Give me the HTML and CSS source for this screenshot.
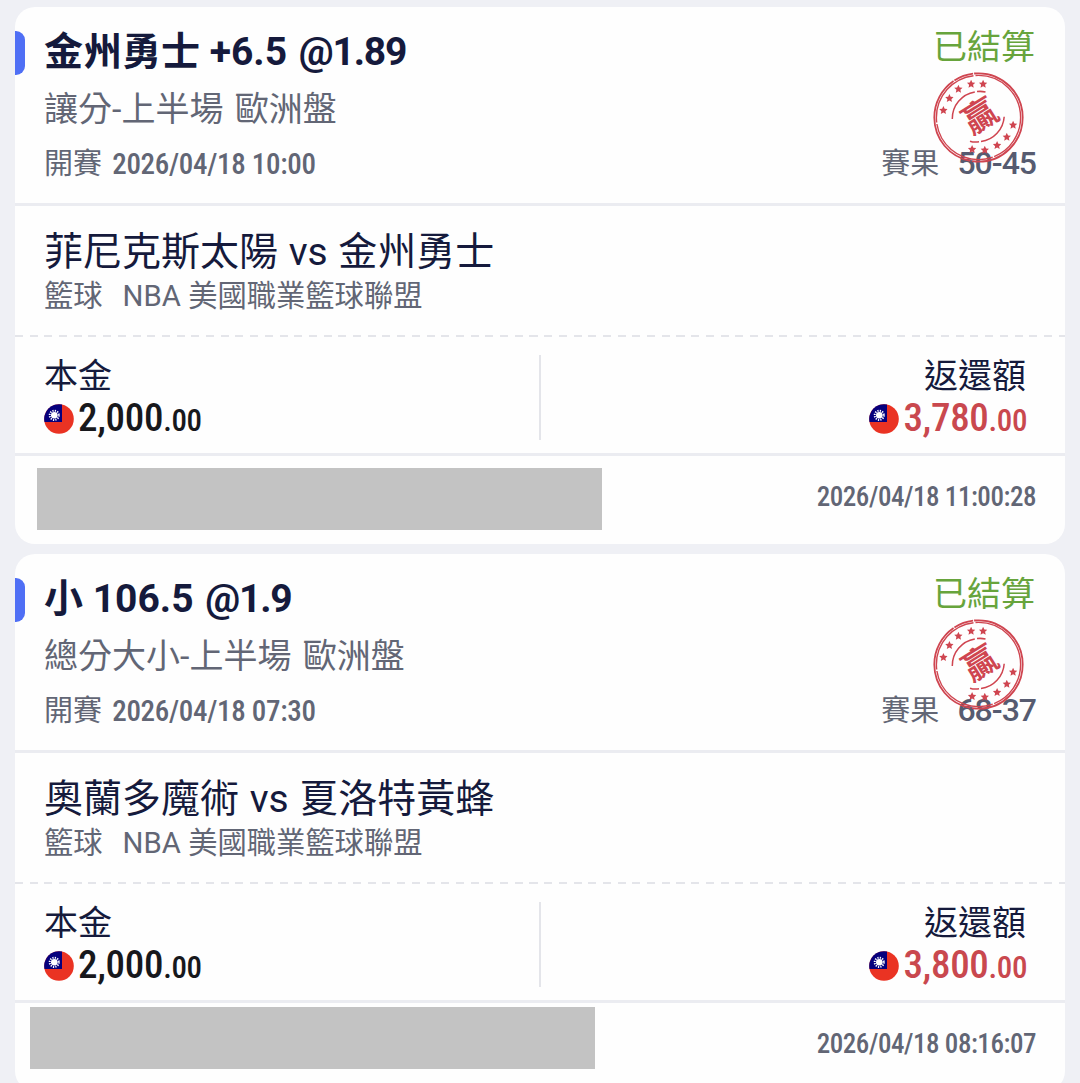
FILE: index.html
```html
<!DOCTYPE html>
<html lang="zh-Hant">
<head>
    <meta charset="UTF-8">
    <meta name="viewport" content="width=device-width, initial-scale=1.0">
    <title>投注紀錄</title>
    <link rel="stylesheet" href="styles.css">
</head>
<body>
    <!-- shared icons -->
    <svg class="defs" width="0" height="0">
        <symbol id="flag" viewBox="0 0 30 30">
            <circle cx="15" cy="15" r="14.8" fill="#ea3323"/>
            <path d="M18 .5V18H.5A14.8 14.8 0 0 1 18 .5z" fill="#06007d"/>
            <circle cx="10.3" cy="11.3" r="4.6" fill="none" stroke="#fff" stroke-width="2" stroke-dasharray="1.2 1.2"/>
            <circle cx="10.3" cy="11.3" r="3.3" fill="#fff"/>
        </symbol>
        <symbol id="star" viewBox="-10 -10 20 20">
            <path d="M0-10 2.9-3.6 9.5-3.1 4.5 1.7 5.9 8.1 0 4.8-5.9 8.1-4.5 1.7-9.5-3.1-2.9-3.6z"/>
        </symbol>
        <symbol id="stamp" viewBox="12 11 94 94">
            <g fill="none" stroke="#cf4550">
                <circle cx="58.5" cy="57.5" r="44.2" stroke-width="1.8" stroke-dasharray="76 1.5 104 1 20 1 74.2 0"/>
                <circle cx="58.5" cy="57.5" r="42.1" stroke-width="1.4" stroke-dasharray="50 1.5 74 1.5 66 2 69.5 0"/>
                <path d="M32.3 59A27 27 0 0 1 54.8 32M57 31.6Q61 31 65.5 32" stroke-width="1.5"/>
                <path d="M84.2 56.7A27 27 0 0 1 61 81.6M59 81.8Q54 82.6 50 81.2" stroke-width="1.5"/>
            </g>
            <g fill="#cf4550">
                <use href="#star" x="19" y="46" width="8.8" height="8.8"/>
                <use href="#star" x="25" y="34" width="8.8" height="8.8"/>
                <use href="#star" x="34" y="24.7" width="8.8" height="8.8"/>
                <use href="#star" x="46.7" y="19.7" width="8.8" height="8.8"/>
                <use href="#star" x="58.7" y="19.7" width="8.8" height="8.8"/>
                <use href="#star" x="88.7" y="60.7" width="8.8" height="8.8"/>
                <use href="#star" x="82.4" y="72.7" width="8.8" height="8.8"/>
                <use href="#star" x="72.7" y="81" width="8.8" height="8.8"/>
                <use href="#star" x="60.4" y="85.7" width="8.8" height="8.8"/>
                <use href="#star" x="47.7" y="85" width="8.8" height="8.8"/>
            </g>
        </symbol>
    </svg>

    <div class="card">
        <div class="bet">
            <div class="bet-info">
                <h2>金州勇士 <span class="handicap">+6.5</span> <span class="odds">@1.89</span></h2>
                <div class="market">讓分-上半場 歐洲盤</div>
                <div class="start">開賽 <span class="num">2026/04/18 10:00</span></div>
            </div>
            <div class="bet-status">
                <div class="status">已結算</div>
                <div class="score">賽果 <span class="num">50-45</span></div>
                <div class="stamp"><svg><use href="#stamp"/></svg><span>贏</span></div>
            </div>
        </div>
        <div class="match">
            <div class="teams">菲尼克斯太陽 vs 金州勇士</div>
            <div class="league"><span>籃球</span><span>NBA 美國職業籃球聯盟</span></div>
        </div>
        <div class="amounts">
            <div class="amount">
                <div class="label">本金</div>
                <div class="money"><svg class="flag"><use href="#flag"/></svg><span>2,000<small>.00</small></span></div>
            </div>
            <div class="amount payout">
                <div class="label">返還額</div>
                <div class="money"><svg class="flag"><use href="#flag"/></svg><span>3,780<small>.00</small></span></div>
            </div>
        </div>
        <div class="footer">
            <div class="mask"></div>
            <div class="time num">2026/04/18 11:00:28</div>
        </div>
    </div>

    <div class="card">
        <div class="bet">
            <div class="bet-info">
                <h2>小 <span class="total">106.5</span> <span class="odds">@1.9</span></h2>
                <div class="market">總分大小-上半場 歐洲盤</div>
                <div class="start">開賽 <span class="num">2026/04/18 07:30</span></div>
            </div>
            <div class="bet-status">
                <div class="status">已結算</div>
                <div class="score">賽果 <span class="num">68-37</span></div>
                <div class="stamp"><svg><use href="#stamp"/></svg><span>贏</span></div>
            </div>
        </div>
        <div class="match">
            <div class="teams">奧蘭多魔術 vs 夏洛特黃蜂</div>
            <div class="league"><span>籃球</span><span>NBA 美國職業籃球聯盟</span></div>
        </div>
        <div class="amounts">
            <div class="amount">
                <div class="label">本金</div>
                <div class="money"><svg class="flag"><use href="#flag"/></svg><span>2,000<small>.00</small></span></div>
            </div>
            <div class="amount payout">
                <div class="label">返還額</div>
                <div class="money"><svg class="flag"><use href="#flag"/></svg><span>3,800<small>.00</small></span></div>
            </div>
        </div>
        <div class="footer">
            <div class="mask mask-high"></div>
            <div class="time num">2026/04/18 08:16:07</div>
        </div>
    </div>
</body>
</html>
```

FILE: styles.css
```css
* {
    box-sizing: border-box;
}
body {
    margin: 0;
    padding: 7px 15px 0;
    height: 1083px;
    overflow: hidden;
    display: flex;
    flex-direction: column;
    gap: 10px;
    background-color: #eff0f5;
    color: #151a3c;
    font-family: Roboto, "Noto Sans CJK TC", sans-serif;
}
.defs {
    position: absolute;
}
.card {
    flex: none;
    height: 537px;
    background-color: #fefefe;
    border-radius: 20px;
    overflow: hidden;
}
.bet {
    display: flex;
    justify-content: space-between;
    height: 199px;
    padding: 17px 30px 0 0;
    border-bottom: 3px solid #ebecf1;
}
.bet-info {
    padding-left: 29px;
    position: relative;
}
.bet-info::before {
    content: "";
    position: absolute;
    left: 0;
    top: 7px;
    width: 10px;
    height: 44px;
    background-color: #4f6ff5;
    border-radius: 0 9px 9px 0;
}
h2 {
    margin: 0;
    font-size: 39px;
    line-height: 57px;
    font-weight: 700;
    white-space: nowrap;
}
.odds {
    margin-left: 2px;
    letter-spacing: -1.2px;
}
.market {
    font-size: 34px;
    line-height: 56px;
    word-spacing: 3px;
    color: #626675;
}
.start,
.score {
    font-size: 29px;
    line-height: 54px;
    white-space: nowrap;
    color: #626675;
}
.num {
    font-size: 29px;
    font-weight: 500;
    font-stretch: 75%;
}
.start .num {
    margin-left: 3px;
    letter-spacing: -0.3px;
}
.bet-status {
    position: relative;
    text-align: right;
}
.status {
    font-size: 34px;
    line-height: 46px;
    color: #67a43c;
}
.score {
    padding-top: 66px;
}
.score .num {
    margin-left: 11px;
    margin-right: -1px;
    font-size: 32px;
    font-stretch: 100%;
    letter-spacing: -1px;
    color: #565b70;
}
.stamp {
    position: absolute;
    right: 9px;
    top: 47px;
    width: 94px;
    height: 94px;
}
.stamp svg {
    display: block;
    width: 94px;
    height: 94px;
}
.stamp span {
    position: absolute;
    left: 28px;
    top: 27px;
    width: 40px;
    text-align: center;
    font-size: 34px;
    line-height: 36px;
    font-weight: 700;
    color: #cf4550;
    transform: rotate(-32deg);
}
.match {
    height: 131px;
    padding: 20px 30px 0 29px;
    background: repeating-linear-gradient(90deg, #e4e5ea 0 8px, transparent 8px 14.7px) no-repeat 0 100% / 100% 2px;
}
.teams {
    font-size: 39px;
    line-height: 52px;
    word-spacing: 1px;
}
.league {
    display: flex;
    gap: 20px;
    font-size: 29.3px;
    line-height: 37px;
    color: #626675;
}
.amounts {
    display: flex;
    height: 119px;
    padding: 18px 0 13px;
    border-bottom: 3px solid #ebecf1;
}
.amount {
    width: 50%;
    padding: 0 29px;
}
.payout {
    margin-left: -1px;
    padding-right: 37px;
    border-left: 2px solid #e4e5ea;
    text-align: right;
}
.label {
    font-size: 34px;
    line-height: 42px;
}
.payout .label {
    padding-right: 1px;
}
.money {
    display: flex;
    align-items: center;
    gap: 4px;
    font-size: 39px;
    line-height: 42px;
    font-weight: 500;
    font-stretch: 75%;
    letter-spacing: -0.3px;
    color: #17181c;
}
.payout .money {
    justify-content: flex-end;
    color: #c9484e;
}
.money small {
    font-size: 31px;
    letter-spacing: -0.4px;
}
.flag {
    width: 30px;
    height: 30px;
    margin-bottom: 2px;
}
.footer {
    display: flex;
    justify-content: space-between;
    height: 88px;
    padding: 0 29px 0 22px;
}
.mask {
    width: 565px;
    height: 62px;
    margin-top: 12px;
    background-color: #c3c3c3;
}
.mask-high {
    margin-top: 4px;
    margin-left: -7px;
}
.time {
    font-size: 27px;
    letter-spacing: -0.45px;
    line-height: 82px;
    color: #626675;
}
```
